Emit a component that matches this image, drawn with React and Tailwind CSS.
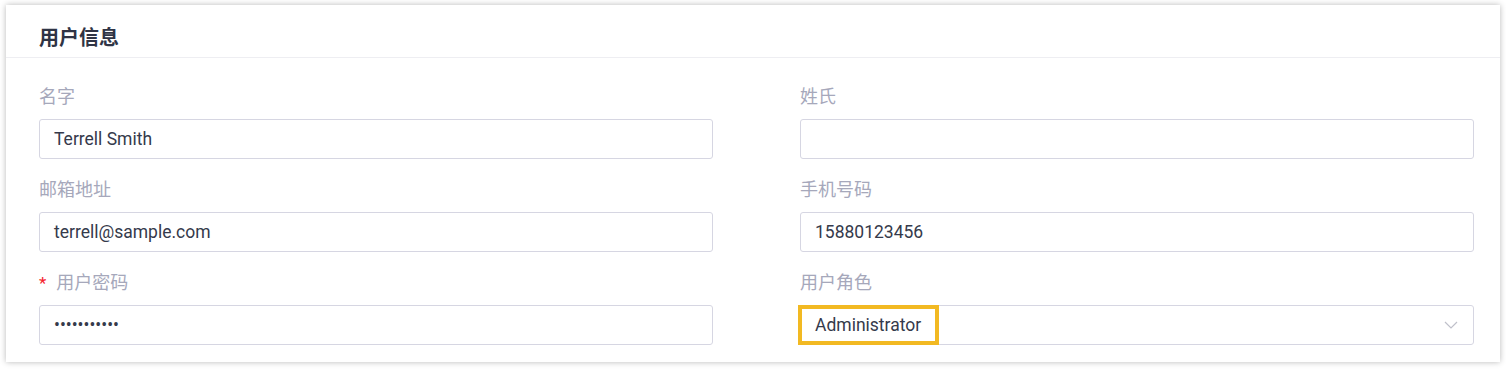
import React from 'react';

const font = { fontFamily: 'Roboto, "Noto Sans CJK SC", sans-serif' };

const Label = ({ children, required }) => (
  <div className="flex items-center h-[24px] text-[18px] text-[#a6a8bb] leading-[24px]">
    {required && <span className="text-[#f5222d] mr-[10px] text-[17px]">*</span>}
    {children}
  </div>
);

const Field = ({ children, className = '' }) => (
  <div
    className={`relative flex items-center h-[40px] border border-[#d6d6e2] rounded-[3px] px-[14px] text-[17.5px] text-[#353a4b] ${className}`}
  >
    {children}
  </div>
);

const Row = ({ label, required, children }) => (
  <div className="flex flex-col gap-[10px]">
    <Label required={required}>{label}</Label>
    {children}
  </div>
);

export default function App() {
  return (
    <div className="w-[1506px] h-[369px] bg-white pt-[5px] pl-[6px]" style={font}>
      <div className="w-[1494px] h-[357px] bg-white shadow-[0_0_6px_rgba(0,0,0,0.28)]">
        {/* header */}
        <div className="h-[53px] flex items-end pb-[5px] pl-[33px] border-b border-[#eeeef2]">
          <h2 className="text-[20px] font-bold text-[#2f3445] leading-[28px]">用户信息</h2>
        </div>

        {/* form */}
        <div className="grid grid-cols-[674px_674px] gap-x-[87px] gap-y-[19px] pl-[33px] pt-[27px]">
          <Row label="名字">
            <Field>Terrell Smith</Field>
          </Row>
          <Row label="姓氏">
            <Field />
          </Row>
          <Row label="邮箱地址">
            <Field>terrell@sample.com</Field>
          </Row>
          <Row label="手机号码">
            <Field>15880123456</Field>
          </Row>
          <Row label="用户密码" required>
            <Field className="tracking-[0px] text-[16px]">•••••••••••</Field>
          </Row>
          <Row label="用户角色">
            <Field className="justify-between">
              <span>Administrator</span>
              <div className="absolute left-[-3px] top-[-1px] w-[141px] h-[40px] border-4 border-[#f2b922]" />
              <svg width="14" height="8" viewBox="0 0 14 8" fill="none" className="mr-[1px]">
                <path d="M1 1l6 6 6-6" stroke="#bfc0ca" strokeWidth="1.2" />
              </svg>
            </Field>
          </Row>
        </div>
      </div>
    </div>
  );
}
